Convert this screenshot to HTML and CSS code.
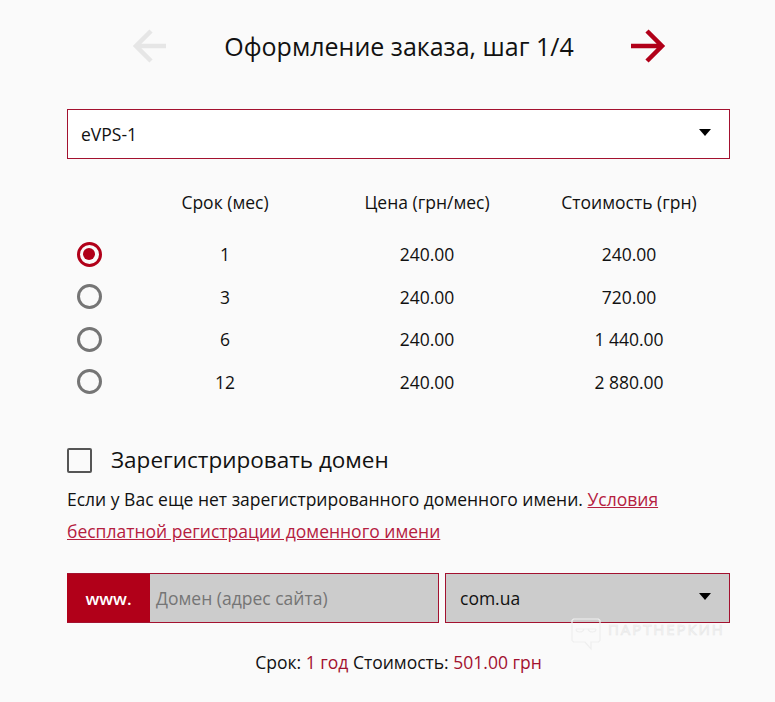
FILE: index.html
```html
<!DOCTYPE html>
<html lang="ru">
<head>
<meta charset="utf-8">
<title>Оформление заказа</title>
<link rel="stylesheet" href="styles.css">
</head>
<body>
<main class="page">
  <header class="head">
    <svg class="arrow arrow-off" viewBox="0 0 35 36"><path d="M19 3 4 18l15 15M4 18h30"/></svg>
    <h1 class="title">Оформление заказа, шаг 1/4</h1>
    <svg class="arrow arrow-on" viewBox="0 0 35 36"><path d="M16 3l15 15-15 15M31 18H0"/></svg>
  </header>

  <div class="select select-white"><span>eVPS-1</span><i class="caret"></i></div>

  <div class="grid grid-head">
    <span></span><span>Срок (мес)</span><span>Цена (грн/мес)</span><span>Стоимость (грн)</span>
  </div>
  <div class="rows">
    <div class="grid row"><span class="radio radio-on"></span><span>1</span><span>240.00</span><span>240.00</span></div>
    <div class="grid row"><span class="radio"></span><span>3</span><span>240.00</span><span>720.00</span></div>
    <div class="grid row"><span class="radio"></span><span>6</span><span>240.00</span><span>1 440.00</span></div>
    <div class="grid row"><span class="radio"></span><span>12</span><span>240.00</span><span>2 880.00</span></div>
  </div>

  <div class="check-line"><span class="check"></span><span class="check-label">Зарегистрировать домен</span></div>
  <p class="note">Если у Вас еще нет зарегистрированного доменного имени. <a class="link" href="#">Условия бесплатной регистрации доменного имени</a></p>

  <div class="domain">
    <div class="domain-input"><span class="www">www.</span><span class="placeholder">Домен (адрес сайта)</span></div>
    <div class="select select-grey"><span>com.ua</span><i class="caret"></i></div>
  </div>

  <p class="total">Срок: <span class="accent">1 год</span> Стоимость: <span class="accent">501.00 грн</span></p>

  <div class="mark">
    <svg class="mark-icon" viewBox="0 0 30 33"><path d="M2.500 1h25l1.500 1.500v20l-1.500 1.500H20v7l-6-7H2.500L1 22.500v-20zM5 11h20M5 11c0 4 7 4 8 0M17 11c1 4 8 4 8 0"/></svg>
    <span class="mark-text">ПАРТНЕРКИН</span>
  </div>
</main>
</body>
</html>
```
FILE: styles.css
```css
* { box-sizing: border-box; }
html, body { margin: 0; background: #fafafa; }
body { font-family: "Open Sans", sans-serif; color: #111; font-size: 17.500px; }
.page { position: relative; width: 775px; height: 702px; padding: 0 45px 0 67px; overflow: hidden; }

.head { height: 109px; padding-bottom: 18px; display: flex; align-items: center; justify-content: space-between; padding-left: 65px; padding-right: 64px; }
.title { margin: 0; font-size: 25px; font-weight: 400; line-height: 32px; }
.arrow { width: 35px; height: 36px; fill: none; stroke-width: 4.500; }
.arrow-off { stroke: #e6e6e6; }
.arrow-on { stroke: #b10019; }

.select { height: 50px; border: 1px solid #a3112f; display: flex; align-items: center; justify-content: space-between; padding: 0 18px 0 13px; }
.select-white { background: #fff; }
.select-grey { background: #ccc; width: 285px; padding-left: 14px; }
.caret { width: 0; height: 0; border-left: 6.500px solid transparent; border-right: 6.500px solid transparent; border-top: 7px solid #000; margin-top: -3px; }

.grid { display: grid; grid-template-columns: 57px 202px 202px 202px; align-items: center; text-align: center; }
.grid-head { margin-top: 27px; height: 32px; }
.rows { margin-top: 15px; }
.row { height: 42.500px; }

.radio { display: block; width: 25px; height: 25px; margin-left: 9.500px; border: 3px solid #757575; border-radius: 50%; position: relative; }
.radio-on { border-color: #b10019; }
.radio-on::after { content: ""; position: absolute; left: 3.500px; top: 3.500px; width: 12px; height: 12px; border-radius: 50%; background: #b10019; }

.check-line { margin-top: 41px; display: flex; align-items: center; height: 32px; }
.check { width: 25px; height: 25px; border: 2.500px solid #555; border-radius: 2px; background: #fafafa; }
.check-label { margin-left: 19px; font-size: 22.500px; line-height: 30px; }
.note { margin: 7px 0 0; line-height: 32px; width: 663px; }
.link { color: #b5203f; }

.domain { margin-top: 26px; display: flex; justify-content: space-between; }
.domain-input { width: 372px; height: 50px; border: 1px solid #a3112f; background: #ccc; display: flex; align-items: center; }
.www { width: 83px; height: 100%; margin-left: -1px; background: #b10019; color: #fff; font-size: 17px; font-weight: 600; display: flex; align-items: center; justify-content: center; }
.placeholder { margin-left: 6px; color: #757575; }

.total { margin: 23px 0 0; text-align: center; line-height: 32px; }
.accent { color: #a3112f; }

.mark { position: absolute; left: 571px; top: 618px; display: flex; gap: 7px; }
.mark-icon { width: 30px; height: 33px; fill: none; stroke: #efefef; stroke-width: 1.200; }
.mark-text { margin-top: 1px; font-size: 15px; font-weight: 400; letter-spacing: 1.900px; line-height: 20px; color: transparent; -webkit-text-stroke: .7px #e8e8e8; }
```
